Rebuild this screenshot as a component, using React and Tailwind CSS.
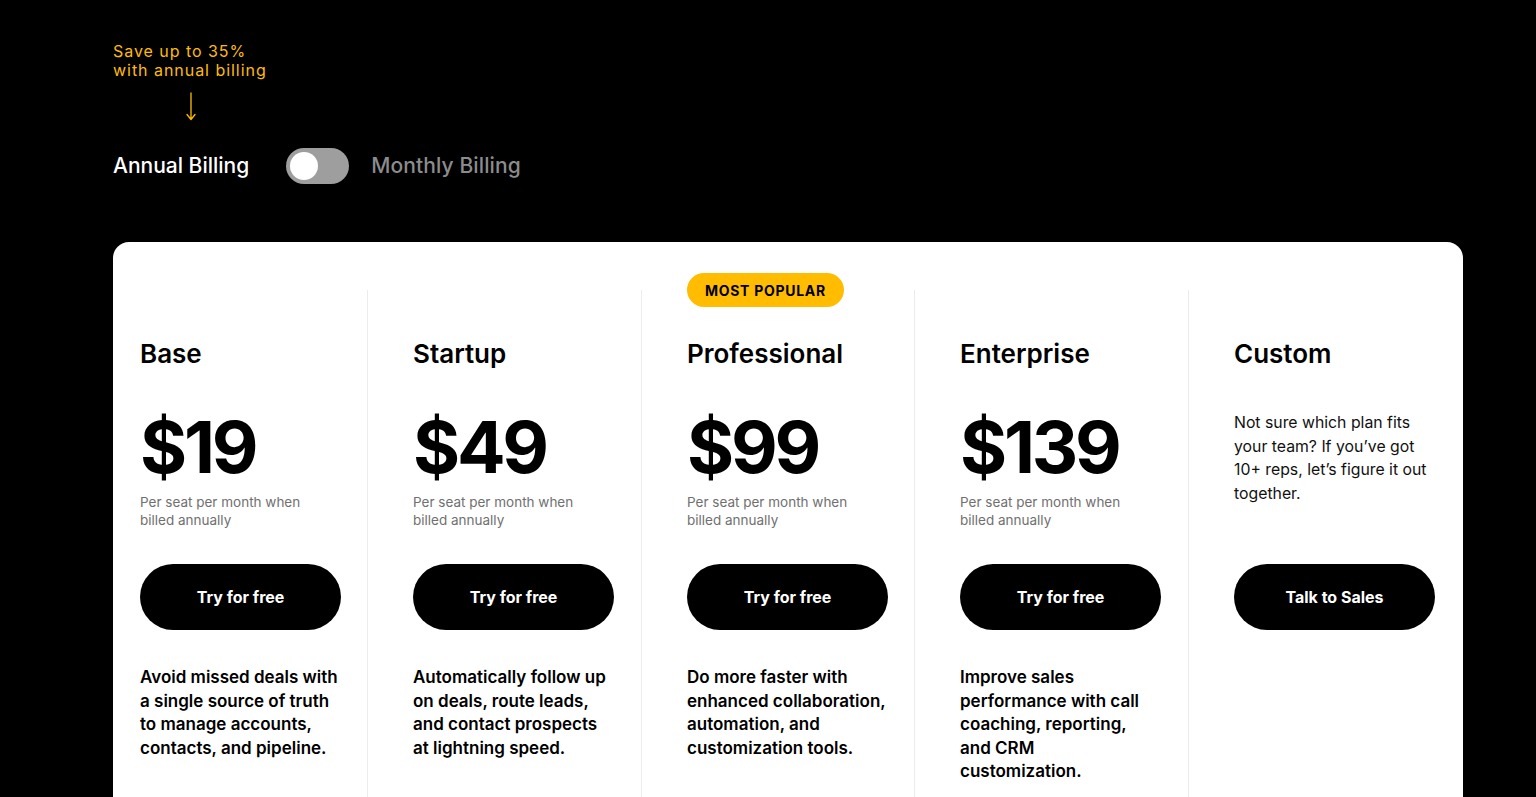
import React from "react";

const plans = [
  {
    name: "Base",
    price: "$19",
    cta: "Try for free",
    blurb: "Avoid missed deals with a single source of truth to manage accounts, contacts, and pipeline.",
  },
  {
    name: "Startup",
    price: "$49",
    cta: "Try for free",
    blurb: "Automatically follow up on deals, route leads, and contact prospects at lightning speed.",
  },
  {
    name: "Professional",
    price: "$99",
    cta: "Try for free",
    popular: true,
    blurb: "Do more faster with enhanced collaboration, automation, and customization tools.",
  },
  {
    name: "Enterprise",
    price: "$139",
    cta: "Try for free",
    blurb: "Improve sales performance with call coaching, reporting, and CRM customization.",
  },
  {
    name: "Custom",
    custom: "Not sure which plan fits your team? If you’ve got 10+ reps, let’s figure it out together.",
    cta: "Talk to Sales",
  },
];

const PlanColumn = ({ plan, first }) => (
  <div
    className={
      first
        ? "relative pl-[27px] pt-[48px] pb-[80px]"
        : "relative border-l border-[#ececec] pl-[45px] pt-[48px] pb-[80px]"
    }
  >
    {/* badge */}
    {plan.popular && (
      <div className="absolute -top-[17px] left-[45px] h-[34px] px-[18px] flex items-center rounded-full bg-[#ffbc00] text-[14px] font-bold tracking-wider text-black">
        MOST POPULAR
      </div>
    )}

    <h3 className="text-[26px] leading-[32px] font-semibold text-black">{plan.name}</h3>

    <div className="h-[194px]">
      {plan.custom ? (
        <p className="pt-[41px] w-[198px] text-[15.8px] leading-[23.5px] text-[#111]">{plan.custom}</p>
      ) : (
        <div className="pt-[41px]">
          <div className="text-[72px] leading-[72px] font-bold tracking-[-0.045em] text-black">
            {plan.price}
          </div>
          <p className="mt-[10px] w-[175px] text-[13.5px] leading-[18px] text-[#707070]">
            Per seat per month when billed annually
          </p>
        </div>
      )}
    </div>

    <button className="w-[201px] h-[66px] rounded-full bg-black text-white text-[16px] font-bold">
      {plan.cta}
    </button>

    {plan.blurb && (
      <p className="mt-[36px] w-[200px] text-[17px] leading-[23.5px] font-semibold text-black">
        {plan.blurb}
      </p>
    )}
  </div>
);

export default function App() {
  return (
    <div className="min-h-screen bg-black font-['Inter',sans-serif] pt-[42px] overflow-hidden">
      {/* Billing switch */}
      <div className="pl-[113px]">
        <p className="text-[16px] leading-[19px] tracking-[0.06em] text-[#ffbc00]">
          Save up to 35%
          <br />
          with annual billing
        </p>
        <svg className="ml-[73px] mt-[12px]" width="10" height="29" viewBox="0 0 10 29" fill="none">
          <path d="M5 1v26M1 22.5l4 5 4-5" stroke="#ffbc00" strokeWidth="1.3" strokeLinecap="round" strokeLinejoin="round" />
        </svg>
        <div className="mt-[27px] flex items-center h-[36px]">
          <span className="text-[21px] font-medium text-white">Annual Billing</span>
          <div className="ml-[37px] w-[63px] h-[36px] rounded-full bg-[#9e9e9e] flex items-center px-[4px]">
            <div className="w-[28px] h-[28px] rounded-full bg-white" />
          </div>
          <span className="ml-[22px] text-[21px] font-medium tracking-[0.005em] text-[#8c8c8c]">Monthly Billing</span>
        </div>
      </div>

      {/* Plans */}
      <div className="ml-[113px] mt-[58px] w-[1350px] rounded-2xl bg-white pt-[48px] grid grid-cols-[254px_274px_273px_274px_1fr]">
        {plans.map((plan, i) => (
          <PlanColumn key={plan.name} plan={plan} first={i === 0} />
        ))}
      </div>
    </div>
  );
}
